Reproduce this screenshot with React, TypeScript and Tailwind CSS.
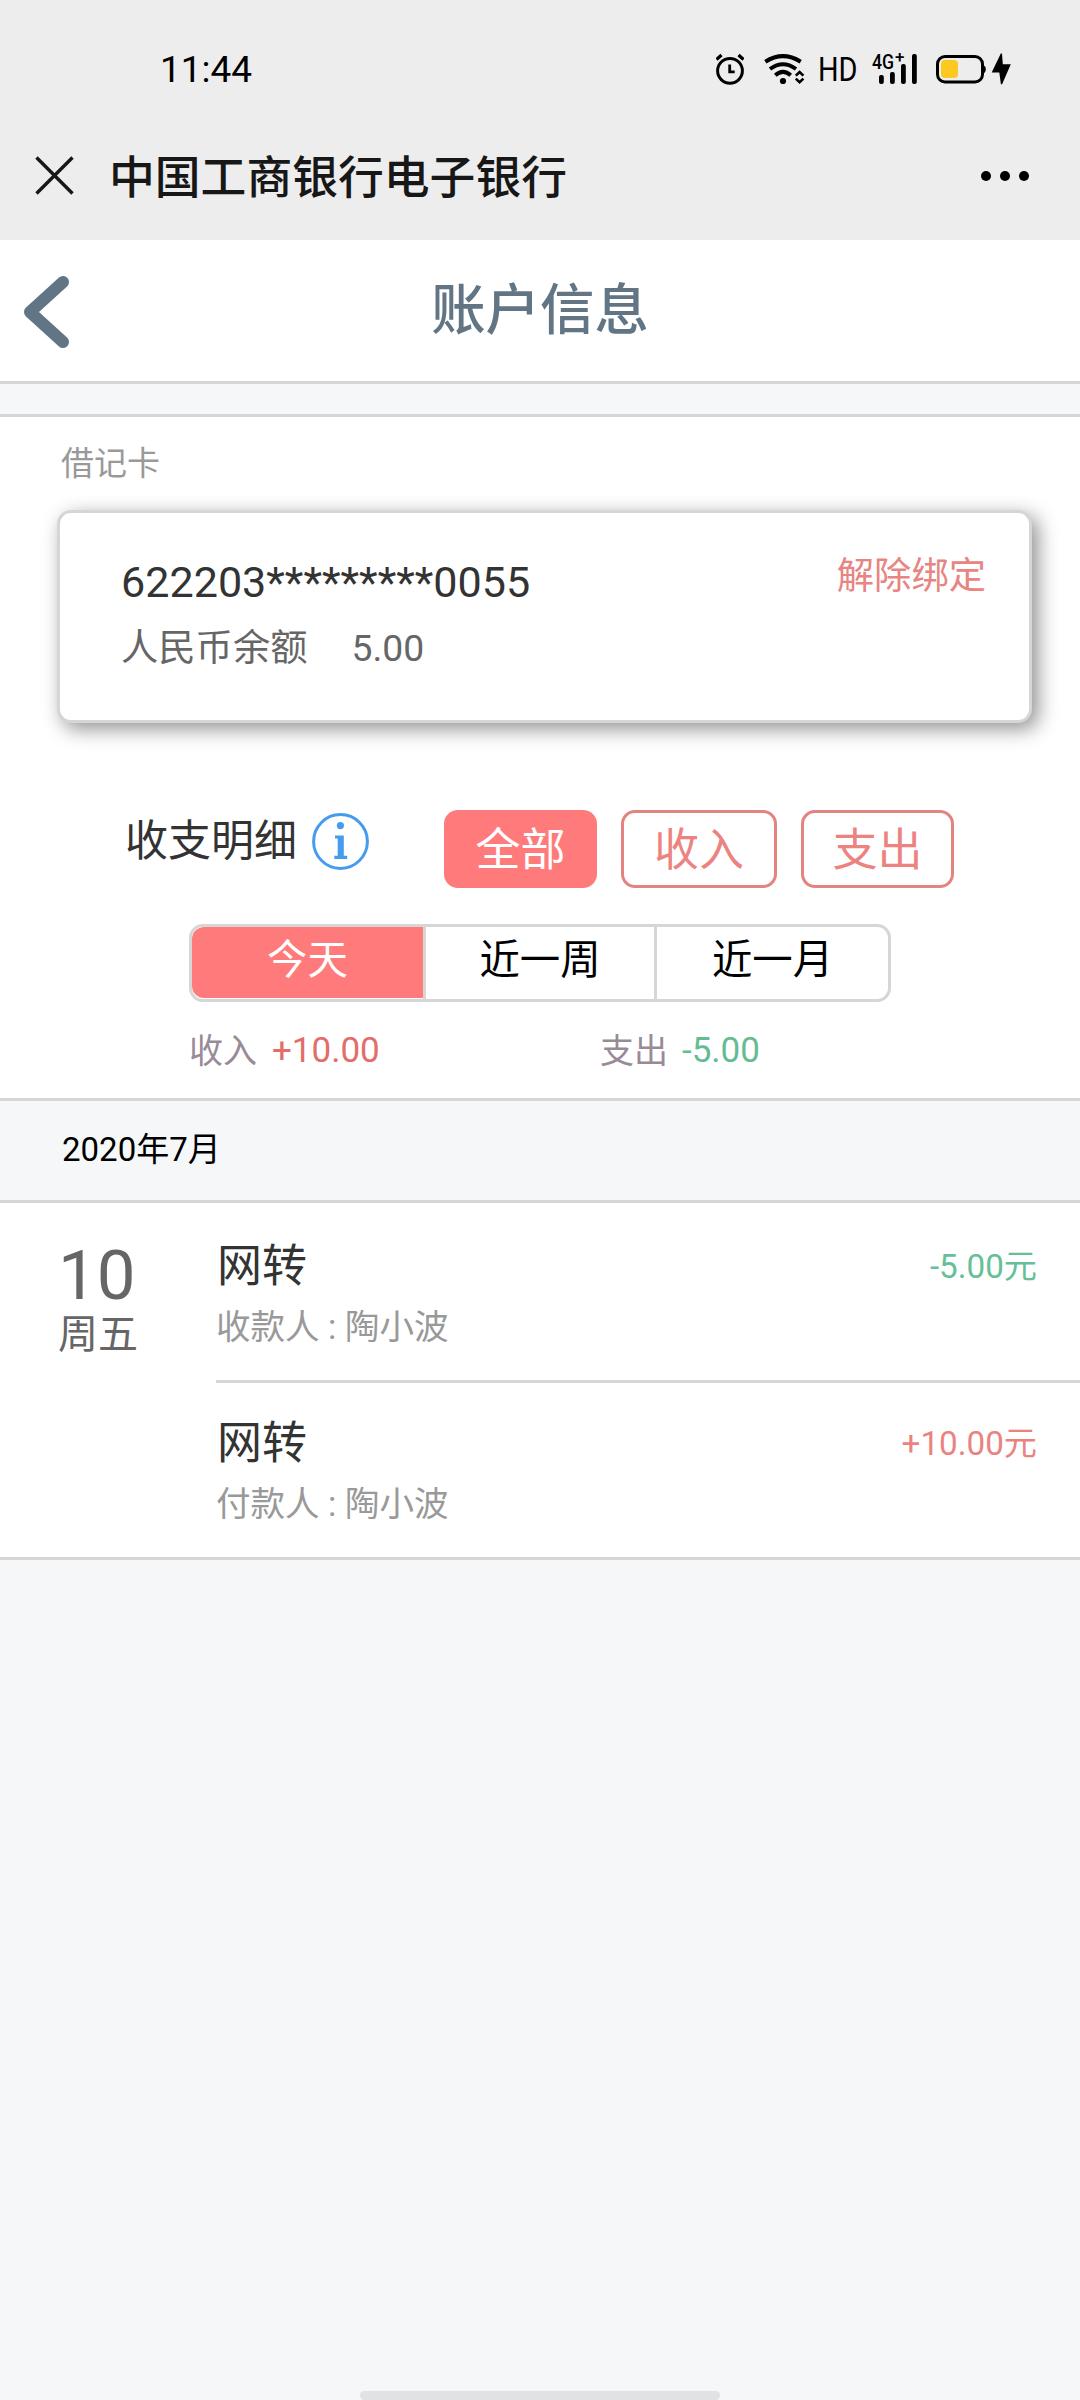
import React from "react";

function StatusBar() {
  return (
    <div className="flex h-[112px] items-start pt-[49px] text-black">
      <div className="ml-[160px] h-10 w-[556px] pt-px text-[37px] leading-[40px]">11:44</div>
      <svg className="h-10 w-7 shrink-0" viewBox="716 49 28 40" fill="none" stroke="currentColor" strokeWidth="3">
        <circle cx="730" cy="70.8" r="12.4" />
        <path d="M716.5 59.5l5-4.5M743.5 59.5l-5-4.5" strokeWidth="3.2" />
        <path d="M729.7 64.5v7.3h5" strokeWidth="2.8" />
      </svg>
      <svg className="ml-5 h-10 w-[41px] shrink-0" viewBox="764 49 41 40" fill="none" stroke="currentColor" strokeWidth="4">
        <path d="M765.3 61.8Q783 50.5 800.7 61.8" />
        <path d="M770 69Q783 59.5 796 69" />
        <path d="M775.3 75.2Q783 68.5 790.7 75.2" />
        <circle cx="783" cy="81" r="3.1" fill="currentColor" stroke="none" />
        <path d="M795.8 75.6l3.8-3.6 3.8 3.6M795.8 78.6l3.8 3.6 3.8-3.6" strokeWidth="2.6" />
      </svg>
      <div className="ml-[13px] h-10 w-[39px]">
        <div className="w-[50px] origin-left scale-x-[0.85] text-[34px] leading-[40px]">HD</div>
      </div>
      <div className="relative ml-[16px] h-10 w-[44px] shrink-0">
        <svg className="h-10 w-[44px]" viewBox="873 49 44 40" fill="currentColor">
          <rect x="879" y="75" width="4.8" height="9" rx="2" />
          <rect x="890" y="72" width="4.8" height="12" rx="2" />
          <rect x="901" y="64" width="4.8" height="20" rx="2" />
          <rect x="912" y="54" width="4.8" height="30" rx="2" />
        </svg>
        <span className="absolute -left-px top-[2px] origin-left scale-x-[0.84] text-[21px] leading-[22px] font-medium">4G</span>
        <span className="absolute left-[22px] top-0 text-[17px] leading-[16px] font-medium">+</span>
      </div>
      <svg className="ml-[19px] h-10 w-[76px] shrink-0" viewBox="936 49 76 40" fill="none">
        <rect x="937.5" y="56.5" width="45" height="25.5" rx="7.5" stroke="currentColor" strokeWidth="3" />
        <rect x="941" y="60" width="17" height="18" rx="4" fill="#fdc820" />
        <path d="M983 65q2.8 1 2.8 4.3t-2.8 4.3z" fill="currentColor" />
        <path d="M1000.8 53.5L991.7 72.5h7.6l1.6 11.8h1.2L1010.8 64.3h-8L1002 53.5z" fill="currentColor" />
      </svg>
    </div>
  );
}

function BrowserBar() {
  return (
    <div className="flex h-32 items-center text-[#171717]">
      <svg className="ml-[35px] h-10 w-10 shrink-0" viewBox="0 0 40 40" fill="none" stroke="currentColor" strokeWidth="3.4">
        <path d="M1.500 1.500l36 36M37.500 1.500l-36 36" />
      </svg>
      <div className="ml-[34px] pt-[5px] text-[45.8px] leading-[60px] font-medium">中国工商银行电子银行</div>
      <div className="mr-[51px] ml-auto flex gap-[9px] text-black">
        <i className="size-[10px] rounded-full bg-current" />
        <i className="size-[10px] rounded-full bg-current" />
        <i className="size-[10px] rounded-full bg-current" />
      </div>
    </div>
  );
}

function CardPanel() {
  return (
    <section className="h-[393px] pt-[27px]">
      <div className="ml-[61px] h-10 text-[33px] leading-[40px] text-[#999]">借记卡</div>
      <div className="mt-[26px] mr-12 ml-[57px] flex h-[213px] justify-between rounded-[14px] border-[3px] border-[#d6d6d6] bg-white pt-[42px] pr-[43px] pl-[61px] shadow-[6px_6px_20px_#919191]">
        <div>
          <div className="pt-px text-[43.1px] leading-[54px] text-[#333]">622203*********0055</div>
          <div className="mt-[17px] flex gap-[44px] text-[37.3px] leading-[42px] text-[#666]">
            <span>人民币余额</span>
            <span>5.00</span>
          </div>
        </div>
        <button className="h-[42px] text-[37.3px] leading-[42px] text-[#e88481]">解除绑定</button>
      </div>
    </section>
  );
}

function Filters() {
  return (
    <section className="h-[288px]">
      <div className="flex h-[78px] text-[45px] leading-[82px]">
        <div className="ml-[125px] w-[187px] text-[43px] leading-[62px] text-[#333]">收支明细</div>
        <svg className="mt-[3px] size-[57px]" viewBox="0 0 57 57" fill="#459cef">
          <circle cx="28.5" cy="28.5" r="26.9" fill="none" stroke="#459cef" strokeWidth="3" />
          <circle cx="28.4" cy="12.6" r="3.6" />
          <path d="M23 22.4h8.800v20.400h3.400v3.300H22.300v-3.300h3.400V25.500H23z" />
        </svg>
        <button className="ml-[75px] w-[153px] rounded-[14px] bg-[#ff7b7b] text-center text-white">全部</button>
        <button className="ml-6 w-[156px] rounded-[14px] border-[3px] border-[#e48481] text-center leading-[76px] text-[#ec8380]">收入</button>
        <button className="ml-6 w-[153px] rounded-[14px] border-[3px] border-[#e48481] text-center leading-[76px] text-[#ec8380]">支出</button>
      </div>
      <div className="mt-9 ml-[189px] flex h-[78px] w-[702px] overflow-hidden rounded-[14px] border-[3px] border-[#d6d6d6] text-center text-[40.4px] leading-[67px] text-black">
        <div className="mb-px w-[231px] rounded-l-[12px] bg-[#ff7b7b] text-white">今天</div>
        <div className="w-[234px] border-x-[3px] border-[#d6d6d6]">近一周</div>
        <div className="w-[231px]">近一月</div>
      </div>
      <div className="mt-[29px] ml-[189px] flex h-10 text-[35px] leading-[40px]">
        <span className="w-[83px] text-[34px] text-[#988b97]">收入</span>
        <span className="w-[328px] text-[#e26e69]">+10.00</span>
        <span className="w-[82px] text-[34px] text-[#988b97]">支出</span>
        <span className="text-[#66bc92]">-5.00</span>
      </div>
    </section>
  );
}

type Item = { title: string; note: string; amount: string; income: boolean };

const items: Item[] = [
  { title: "网转", note: "收款人 : 陶小波", amount: "-5.00元", income: false },
  { title: "网转", note: "付款人 : 陶小波", amount: "+10.00元", income: true },
];

function Transactions() {
  return (
    <section className="flex h-[357px] border-b-[3px] border-[#d6d6d6] bg-white">
      <div className="w-[216px] pt-[37px] pl-[58px] text-[#666]">
        <div className="text-[69px] leading-[72px]">10</div>
        <div className="text-[40px] leading-[46px]">周五</div>
      </div>
      <div className="flex-1">
        {items.map((it) => (
          <div
            key={it.note}
            className="flex h-[174px] justify-between pt-[34px] pr-[43px] first:h-[180px] first:border-b-[3px] first:border-[#d6d6d6] first:pt-[37px]"
          >
            <div>
              <div className="pl-px text-[45px] leading-[54px] text-[#333]">{it.title}</div>
              <div className="mt-[12px] text-[34.5px] leading-[42px] text-[#999]">{it.note}</div>
            </div>
            <div className={it.income ? "text-[33.2px] leading-[53px] text-[#ea8380]" : "text-[33.2px] leading-[53px] text-[#66bf96]"}>
              {it.amount}
            </div>
          </div>
        ))}
      </div>
    </section>
  );
}

export default function App() {
  return (
    <div className="flex h-[2400px] w-[1080px] flex-col overflow-hidden bg-[#f5f7f9] font-[Roboto,'Noto_Sans_CJK_SC',sans-serif] whitespace-nowrap">
      <header className="h-60 bg-[#ededed]">
        <StatusBar />
        <BrowserBar />
      </header>
      <div className="grid h-36 grid-cols-[216px_1fr_216px] border-b-[3px] border-[#d6d6d6] bg-white">
        <svg className="mt-[35px] ml-[23px] h-[74px] w-[47px]" viewBox="0 0 47 74" fill="none" stroke="#627585" strokeWidth="12" strokeLinecap="round" strokeLinejoin="round">
          <path d="M40 7L7 37l33 30" />
        </svg>
        <h1 className="text-center text-[54.4px] leading-[141px] font-medium text-[#627585]">账户信息</h1>
      </div>
      <div className="mt-[30px] h-[687px] border-y-[3px] border-[#d6d6d6] bg-white">
        <CardPanel />
        <Filters />
      </div>
      <div className="h-[102px] border-b-[3px] border-[#d6d6d6] pl-[62px] text-[33px] leading-[98px] text-black">2020年7月</div>
      <Transactions />
      <div className="mt-auto h-[9px] w-[360px] self-center rounded-full bg-[#e1e2e3]" />
    </div>
  );
}
